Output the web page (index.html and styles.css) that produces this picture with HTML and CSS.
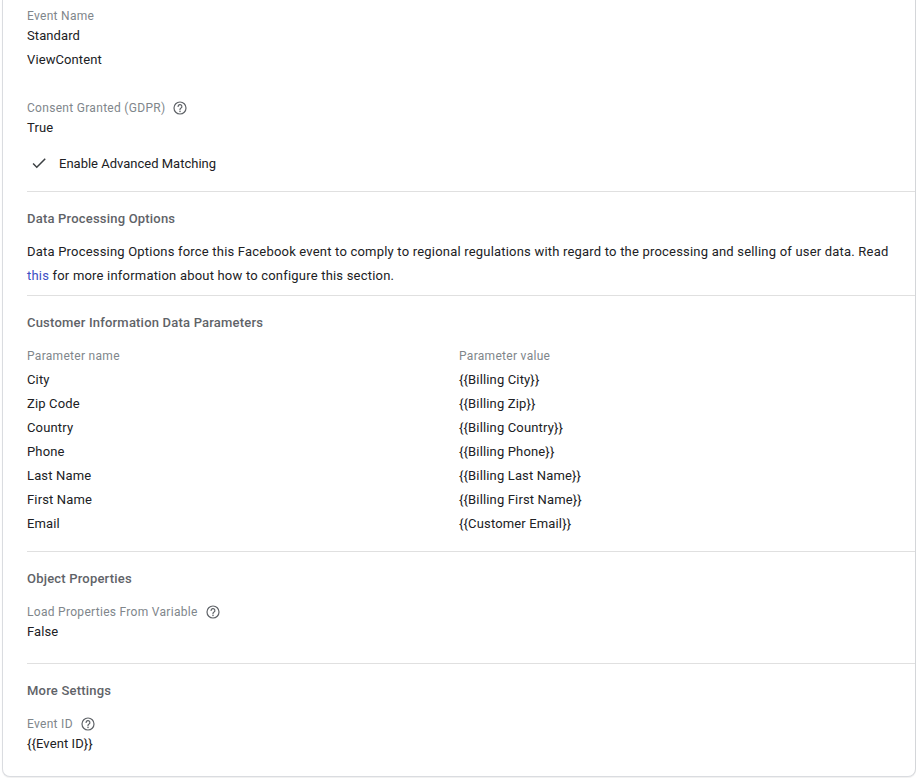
FILE: index.html
```html
<!DOCTYPE html>
<html lang="en">
<head>
<meta charset="utf-8">
<title>Tag configuration</title>
<link rel="stylesheet" href="styles.css">
</head>
<body>
<div class="card">
  <section class="section first">
    <div class="label l-top">Event Name</div>
    <div class="value">Standard</div>
    <div class="value">ViewContent</div>

    <div class="label with-help l-consent">Consent Granted (GDPR)
      <svg class="help" viewBox="0 0 14 14" aria-hidden="true"><circle cx="7" cy="7" r="6" fill="none" stroke="#5f6368" stroke-width="1.2"/><path d="M5.1 5.5a1.9 1.9 0 1 1 2.7 1.7c-.5.3-.8.6-.8 1.2v.4" fill="none" stroke="#5f6368" stroke-width="1.2" stroke-linecap="round"/><circle cx="7" cy="10.4" r=".75" fill="#5f6368"/></svg>
    </div>
    <div class="value">True</div>

    <div class="check-row">
      <svg class="check" viewBox="0 0 24 24" aria-hidden="true"><path d="M9 16.17L4.83 12l-1.42 1.41L9 19 21 7l-1.41-1.41z" fill="#3c4043"/></svg>
      <span>Enable Advanced Matching</span>
    </div>
  </section>

  <section class="section">
    <div class="heading">Data Processing Options</div>
    <p class="para">Data Processing Options force this Facebook event to comply to regional regulations with regard to the processing and selling of user data. Read <a href="#" class="link">this</a> for more information about how to configure this section.</p>
  </section>

  <section class="section params">
    <div class="heading">Customer Information Data Parameters</div>
    <div class="table">
      <div class="th">Parameter name</div><div class="th">Parameter value</div>
      <div class="td">City</div><div class="td">{{Billing City}}</div>
      <div class="td">Zip Code</div><div class="td">{{Billing Zip}}</div>
      <div class="td">Country</div><div class="td">{{Billing Country}}</div>
      <div class="td">Phone</div><div class="td">{{Billing Phone}}</div>
      <div class="td">Last Name</div><div class="td">{{Billing Last Name}}</div>
      <div class="td">First Name</div><div class="td">{{Billing First Name}}</div>
      <div class="td">Email</div><div class="td">{{Customer Email}}</div>
    </div>
  </section>

  <section class="section obj">
    <div class="heading">Object Properties</div>
    <div class="label with-help l-after-head">Load Properties From Variable
      <svg class="help" viewBox="0 0 14 14" aria-hidden="true"><circle cx="7" cy="7" r="6" fill="none" stroke="#5f6368" stroke-width="1.2"/><path d="M5.1 5.5a1.9 1.9 0 1 1 2.7 1.7c-.5.3-.8.6-.8 1.2v.4" fill="none" stroke="#5f6368" stroke-width="1.2" stroke-linecap="round"/><circle cx="7" cy="10.4" r=".75" fill="#5f6368"/></svg>
    </div>
    <div class="value">False</div>
  </section>

  <section class="section last">
    <div class="heading">More Settings</div>
    <div class="label with-help l-after-head">Event ID
      <svg class="help" viewBox="0 0 14 14" aria-hidden="true"><circle cx="7" cy="7" r="6" fill="none" stroke="#5f6368" stroke-width="1.2"/><path d="M5.1 5.5a1.9 1.9 0 1 1 2.7 1.7c-.5.3-.8.6-.8 1.2v.4" fill="none" stroke="#5f6368" stroke-width="1.2" stroke-linecap="round"/><circle cx="7" cy="10.4" r=".75" fill="#5f6368"/></svg>
    </div>
    <div class="value">{{Event ID}}</div>
  </section>
</div>
</body>
</html>
```
FILE: styles.css
```css
* { box-sizing: border-box; }
html, body {
  margin: 0;
  padding: 0;
  background: #ffffff;
}
body {
  font-family: Roboto, "Liberation Sans", Arial, sans-serif;
  color: #202124;
  font-size: 13px;
  padding-left: 2px;
  height: 778px;
  overflow: hidden;
}
.card {
  background: #fff;
  border: 1px solid #dadce0;
  border-top: none;
  border-right-color: #d4d6d9;
  border-radius: 0 0 8px 8px;
  height: 777px;
  padding-left: 24px;
  box-shadow: 0 1px 1px rgba(60, 64, 67, .08);
}
.section {
  border-bottom: 1px solid #e0e0e0;
  padding-top: 17px;
  padding-right: 24px;
}
.section.first { padding-top: 8px; padding-bottom: 16px; }
.section.last { border-bottom: none; }
.label {
  font-size: 12px;
  line-height: 16px;
  color: #80868b;
  letter-spacing: .3px;
  display: flex;
  align-items: center;
}
.help {
  width: 14px;
  height: 14px;
  margin-left: 8px;
  flex: none;
}
.value {
  font-size: 13px;
  line-height: 24px;
  color: #202124;
  letter-spacing: .1px;
}
.l-consent { margin-top: 28px; }
.check-row {
  margin-top: 11px;
  display: flex;
  align-items: center;
  height: 24px;
  font-size: 13px;
  color: #202124;
}
.check {
  width: 18px;
  height: 18px;
  margin-left: 3px;
  margin-right: 11px;
}
.heading {
  font-size: 13px;
  line-height: 20px;
  font-weight: 500;
  color: #5f6368;
  letter-spacing: .2px;
}
.para {
  margin: 11px 0 7px;
  font-size: 13px;
  line-height: 24px;
  color: #202124;
  letter-spacing: .2px;
}
.link {
  color: #3c4ec4;
  text-decoration: none;
}
.table {
  display: grid;
  grid-template-columns: 1fr 1fr;
  margin-top: 11px;
  padding-bottom: 15px;
}
.th {
  font-size: 12px;
  line-height: 24px;
  color: #80868b;
  letter-spacing: .3px;
}
.td {
  font-size: 13px;
  line-height: 24px;
  color: #202124;
  letter-spacing: .15px;
}
.l-after-head { margin-top: 15px; }
.obj { padding-bottom: 19px; }
```
